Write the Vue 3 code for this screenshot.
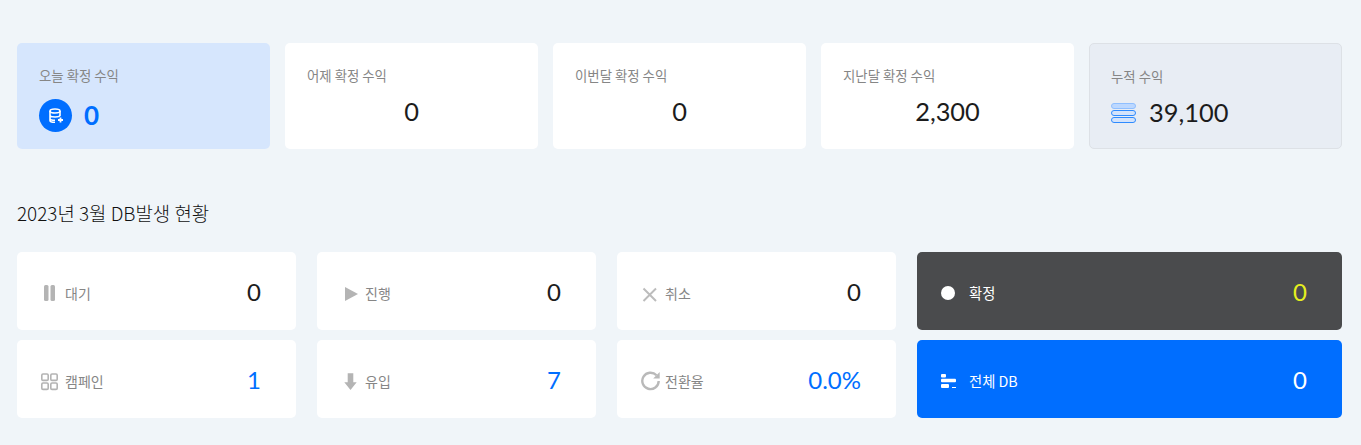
<template>
  <div class="page">
    <!-- 수익 요약 -->
    <div class="summary">
      <div v-for="item in summary" :key="item.label" class="sum-card" :class="item.type">
        <div class="sum-label">{{ item.label }}</div>
        <div class="sum-value">
          <span v-if="item.type === 'today'" class="today-icon">
            <svg width="18" height="18" viewBox="0 0 18 18" fill="none" stroke="#fff" stroke-width="1.600">
              <ellipse cx="8" cy="4" rx="5" ry="2" />
              <path d="M3 4v9.500c0 1 2 1.800 5 1.800M13 4v5M3 8c0 1 2 2 5 2s5-1 5-2M3 11.500c0 1 2 1.800 5 1.800" />
              <path d="M13.500 10.500v5M11 13h5" stroke-width="1.800" />
            </svg>
          </span>
          <span v-if="item.type === 'total'" class="total-icon">
            <i class="light"></i><i></i><i></i>
          </span>
          <span class="num" :class="{ center: !item.type }">{{ item.value }}</span>
        </div>
      </div>
    </div>

    <h2 class="title">2023년 3월 DB발생 현황</h2>

    <!-- DB 현황 -->
    <div class="status">
      <div v-for="s in status" :key="s.label" class="st-card" :class="s.type">
        <div class="st-left">
          <span class="st-icon">
            <svg v-if="s.icon === 'pause'" width="24" height="24" viewBox="0 0 24 24" fill="#b4b4b4">
              <rect x="3" y="4" width="4.500" height="16" rx="1.500" />
              <rect x="9.500" y="4" width="4.500" height="16" rx="1.500" />
            </svg>
            <svg v-else-if="s.icon === 'play'" width="24" height="24" viewBox="0 0 24 24" fill="#b4b4b4">
              <path d="M4 6l13 7-13 7z" />
            </svg>
            <svg v-else-if="s.icon === 'close'" width="24" height="24" viewBox="0 0 24 24" fill="none" stroke="#bcbcbc" stroke-width="2">
              <path d="M2.500 7.500l12.500 12.500M15 7.500l-12.500 12.500" />
            </svg>
            <svg v-else-if="s.icon === 'grid'" width="24" height="24" viewBox="0 0 24 24" fill="none" stroke="#b4b4b4" stroke-width="1.600">
              <rect x="0.800" y="5" width="6.400" height="6.400" rx="1.200" />
              <rect x="9.800" y="5" width="6.400" height="6.400" rx="1.200" />
              <rect x="0.800" y="14" width="6.400" height="6.400" rx="1.200" />
              <rect x="9.800" y="14" width="6.400" height="6.400" rx="1.200" />
            </svg>
            <svg v-else-if="s.icon === 'down'" width="24" height="24" viewBox="0 0 24 24" fill="#b4b4b4">
              <path d="M6.700 4.300h5.600v9h3.400L9.500 21 3.300 13.300h3.400z" />
            </svg>
            <svg v-else-if="s.icon === 'rotate'" width="24" height="24" viewBox="0 0 24 24" fill="none" stroke="#b9b9b9" stroke-width="2.400">
              <path d="M15.500 6.300A8.200 8.200 0 1 0 17.700 12" />
              <path d="M18.700 3v6.500h-6.500z" fill="#b9b9b9" stroke="none" />
            </svg>
            <span v-else-if="s.icon === 'dot'" class="dot"></span>
            <svg v-else-if="s.icon === 'bars'" width="16" height="16" viewBox="0 0 16 16" fill="#fff">
              <rect x="0" y="1" width="5" height="3.500" rx="1" />
              <rect x="0" y="5.700" width="15" height="3.500" rx="1" />
              <rect x="0" y="11" width="8" height="4" rx="1" />
              <rect x="11" y="14" width="4" height="1" />
            </svg>
          </span>
          <span class="st-label">{{ s.label }}</span>
        </div>
        <span class="st-num">{{ s.value }}</span>
      </div>
    </div>
  </div>
</template>

<script setup>
const summary = [
  { label: '오늘 확정 수익', value: '0', type: 'today' },
  { label: '어제 확정 수익', value: '0', type: '' },
  { label: '이번달 확정 수익', value: '0', type: '' },
  { label: '지난달 확정 수익', value: '2,300', type: '' },
  { label: '누적 수익', value: '39,100', type: 'total' }
]

// 화면 순서대로 (4열 2행)
const status = [
  { label: '대기', value: '0', icon: 'pause', type: '' },
  { label: '진행', value: '0', icon: 'play', type: '' },
  { label: '취소', value: '0', icon: 'close', type: '' },
  { label: '확정', value: '0', icon: 'dot', type: 'dark' },
  { label: '캠페인', value: '1', icon: 'grid', type: 'blue-num' },
  { label: '유입', value: '7', icon: 'down', type: 'blue-num' },
  { label: '전환율', value: '0.0%', icon: 'rotate', type: 'blue-num' },
  { label: '전체 DB', value: '0', icon: 'bars', type: 'blue' }
]
</script>

<style>
html, body {
  background: #f0f5f9;
}
</style>

<style scoped>
.page {
  width: 1325px;
  height: 402px;
  padding: 43px 0 0 17px;
  font-family: "Noto Sans CJK KR", "Noto Sans", sans-serif;
  background: #f0f5f9;
}

.summary {
  display: grid;
  grid-template-columns: repeat(5, 253px);
  gap: 15px;
}

.sum-card {
  height: 106px;
  box-sizing: border-box;
  padding: 23px 22px 0;
  background: #fff;
  border-radius: 5px;
}

.sum-card.today {
  background: #d6e6fd;
}

.sum-card.total {
  background: #e8edf4;
  border: 1px solid #dde1e6;
  padding: 23px 21px 0;
}

.sum-label {
  font-size: 13.400px;
  line-height: 18px;
  color: #868686;
}

.sum-value {
  display: flex;
  align-items: center;
  height: 33px;
  margin-top: 15px;
}

.total .sum-value {
  margin-top: 14px;
}

.num {
  font-family: Lato, sans-serif;
  font-size: 25.400px;
  color: #1c1c1c;
}

.num.center {
  flex: 1;
  text-align: center;
  margin-top: -9px;
}

.today .num {
  margin-left: 12px;
  margin-top: -2px;
  font-size: 26px;
  font-weight: 700;
  color: #006eff;
}

.total .num {
  margin-left: 13px;
  margin-top: -7px;
}

.today-icon {
  display: flex;
  align-items: center;
  justify-content: center;
  width: 33px;
  height: 33px;
  border-radius: 50%;
  background: #006eff;
}

.total-icon {
  display: flex;
  flex-direction: column;
  gap: 0.500px;
  width: 25px;
  margin-top: -5px;
}

.total-icon i {
  display: block;
  box-sizing: border-box;
  height: 6.500px;
  border: 1px solid #2e8bff;
  border-radius: 4px;
  background: #d3e3fb;
}

.total-icon i.light {
  background: #bcd8ff;
  border-color: #8fbfff;
}

.title {
  margin: 51px 0 0;
  font-size: 18.900px;
  line-height: 26px;
  font-weight: 300;
  color: #111;
}

.status {
  display: grid;
  grid-template-columns: 279px 279px 279px 425px;
  grid-auto-rows: 78px;
  column-gap: 21px;
  row-gap: 10px;
  margin-top: 26px;
}

.st-card {
  display: flex;
  align-items: center;
  justify-content: space-between;
  padding: 0 35px 0 24px;
  background: #fff;
  border-radius: 5px;
}

.st-left {
  display: flex;
  align-items: center;
  margin-top: 4px;
}

.st-icon {
  display: flex;
  align-items: center;
  width: 24px;
  height: 24px;
}

.st-label {
  font-size: 14px;
  line-height: 18px;
  color: #868686;
}

.st-num {
  font-family: Lato, sans-serif;
  font-size: 24px;
  line-height: 26px;
  color: #1c1c1c;
  margin-top: 2px;
}

.blue-num .st-num {
  color: #006eff;
}

.dark {
  background: #4a4b4d;
}

.blue {
  background: #006eff;
}

.dark .st-icon, .blue .st-icon {
  margin-right: 4px;
}

.dark .st-label, .blue .st-label {
  color: #fff;
  font-size: 14.300px;
}

.dark .st-num {
  color: #e6f01e;
}

.blue .st-num {
  color: #fff;
}

.dot {
  display: block;
  width: 14px;
  height: 14px;
  border-radius: 50%;
  background: #fff;
}
</style>
